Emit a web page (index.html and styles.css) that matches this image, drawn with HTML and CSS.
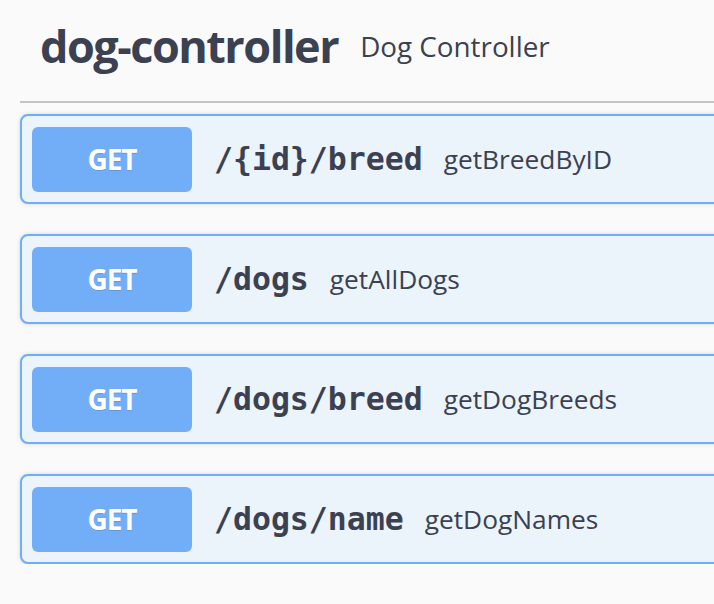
FILE: index.html
```html
<!DOCTYPE html>
<html>
<head>
<meta charset="utf-8">
<link rel="stylesheet" href="styles.css">
</head>
<body>
<div class="tag-section">
  <h3 class="tag">
    <span class="tag-name">dog-controller</span>
    <small class="tag-desc">Dog Controller</small>
  </h3>
  <div class="ops">
    <div class="op">
      <span class="method">GET</span>
      <span class="path">/{id}/breed</span>
      <span class="summary">getBreedByID</span>
    </div>
    <div class="op">
      <span class="method">GET</span>
      <span class="path">/dogs</span>
      <span class="summary">getAllDogs</span>
    </div>
    <div class="op">
      <span class="method">GET</span>
      <span class="path">/dogs/breed</span>
      <span class="summary">getDogBreeds</span>
    </div>
    <div class="op">
      <span class="method">GET</span>
      <span class="path">/dogs/name</span>
      <span class="summary">getDogNames</span>
    </div>
  </div>
</div>
</body>
</html>
```

FILE: styles.css
```css
html, body {
  margin: 0;
  padding: 0;
  background: #fafafa;
  color: #3b4151;
  font-family: "Open Sans", sans-serif;
}

.tag-section {
  margin-left: 20px;
  width: 720px;
}

.tag {
  margin: 0;
  height: 103px;
  box-sizing: border-box;
  border-bottom: 2px solid #c4c4c6;
  display: flex;
  align-items: flex-start;
  padding: 15px 0 0 20px;
}

.tag-name {
  font-size: 45px;
  font-weight: 700;
  letter-spacing: -1.5px;
  line-height: 62px;
}

.tag-desc {
  font-size: 27.8px;
  font-weight: 400;
  line-height: 38px;
  margin-left: 22px;
  margin-top: 12px;
}

.ops {
  display: flex;
  flex-direction: column;
  gap: 30px;
  padding-top: 11px;
}

.op {
  height: 90px;
  box-sizing: border-box;
  border: 2px solid #6fadf8;
  border-radius: 8px;
  background: #ebf3fb;
  box-shadow: 0 0 4px rgba(0, 0, 0, 0.15);
  display: flex;
  align-items: center;
  padding: 0 10px;
}

.method {
  width: 160px;
  height: 65px;
  flex: none;
  border-radius: 6px;
  background: #72aef8;
  color: #fff;
  font-size: 28px;
  font-weight: 700;
  letter-spacing: -1px;
  text-shadow: 0 1px 0 rgba(0, 0, 0, 0.12);
  display: flex;
  align-items: center;
  justify-content: center;
}

.path {
  margin-left: 22px;
  font-family: "DejaVu Sans Mono", monospace;
  font-weight: 700;
  font-size: 31.5px;
  color: #3b4151;
}

.summary {
  margin-left: 21px;
  font-size: 26.3px;
  color: #3b4151;
}
```
